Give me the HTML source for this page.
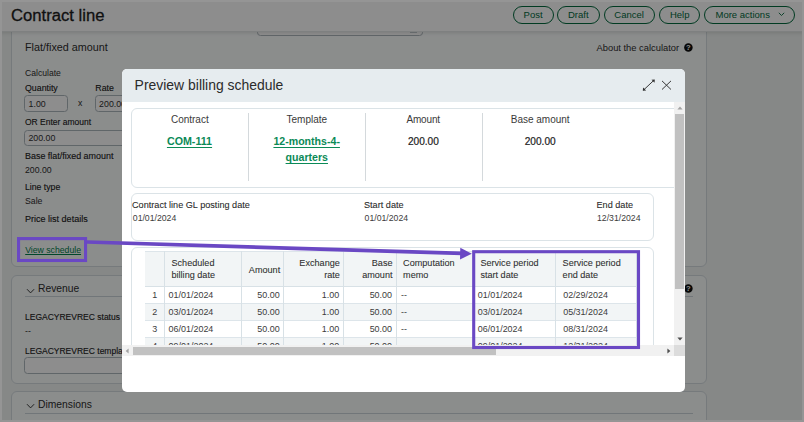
<!DOCTYPE html>
<html lang="en"><head><meta charset="utf-8"><title>Contract line</title>
<style>
html,body{margin:0;padding:0}
body{width:804px;height:422px;overflow:hidden;position:relative;background:#959595;font-family:"Liberation Sans",sans-serif;}
.abs{position:absolute;display:block}
.t{position:absolute;white-space:nowrap;line-height:1;color:#1a1a1a}
.r{position:absolute;box-sizing:border-box}
#bg{position:absolute;left:0;top:0;width:804px;height:422px;background:#f2f6f4;overflow:hidden}
#ov{position:absolute;left:0;top:0;width:804px;height:422px;background:rgba(3,3,3,.45)}
.card{background:#fcfffe;border:1px solid #d5dde1;border-radius:6px}
.inp{background:#fff;border:1.2px solid #aeb8bd;border-radius:3.5px}
.iv{color:#303030}
#hdr{background:#fff;box-shadow:0 1px 0 #e3e7e7,0 2px 4px rgba(0,0,0,.13)}
.d{color:#2c2c2c}
.m{color:#202020;-webkit-text-stroke:0.13px #202020}
.lnk{color:#00804a;text-decoration:underline;text-decoration-thickness:0.8px;text-underline-offset:1.2px}
.btn{position:absolute;box-sizing:border-box;border:1.4px solid #006a3c;border-radius:10px;color:#006a3c;font-size:9.5px;line-height:16.4px;text-align:center;white-space:nowrap}
#modal{position:absolute;left:122px;top:69px;width:563px;height:323px;background:#fff;border-radius:5px;overflow:hidden}
#mh{position:absolute;left:0;top:0;width:563px;height:33px;background:#e6ecef}
#vp{position:absolute;left:122px;top:102px;width:552px;height:243px;overflow:hidden;background:#fff}
.mcard{background:#fff;border:1px solid #dbe3e7;border-radius:6px}
.g{color:#3a3a3a}
.ml{color:#0b8a57;font-weight:bold;text-decoration:underline;text-underline-offset:1.5px}
.v{color:#222;-webkit-text-stroke:0.2px #222}
.k{color:#2a2a2a;-webkit-text-stroke:0.08px #2a2a2a}
.c{color:#3c3c3c}
.h{color:#303030;-webkit-text-stroke:0.08px #303030}
</style></head>
<body>
<div id="bg">
<div class="r card" style="left:11px;top:20px;width:696px;height:247.4px;"></div>
<div class="r card" style="left:11px;top:274.5px;width:696px;height:109px;"></div>
<div class="r card" style="left:11px;top:390.6px;width:696px;height:60px;"></div>
<div class="r inp" style="left:256.5px;top:20px;width:166.4px;height:15.5px;"></div>
<div class="r " style="left:409.5px;top:31.5px;width:7px;height:1px;background:#c5cdd1"></div>
<div class="t d" style="left:25px;top:42.00px;font-size:10.8px;">Flat/fixed amount</div>
<div class="t d" style="left:596.5px;top:44.00px;font-size:9.35px;">About the calculator</div>
<svg class="abs" style="left:683.7px;top:43.45px" width="9" height="9" viewBox="0 0 9 9"><circle cx="4.4" cy="4.4" r="4.25" fill="#0c0c0c"/><text x="4.4" y="7.2" font-size="7.6" font-weight="bold" text-anchor="middle" fill="#fff" font-family="Liberation Sans, sans-serif">?</text></svg>
<div class="t d" style="left:25px;top:69.00px;font-size:8.6px;">Calculate</div>
<div class="t d m" style="left:25px;top:84.00px;font-size:8.8px;">Quantity</div>
<div class="t d m" style="left:95.3px;top:84.00px;font-size:8.8px;">Rate</div>
<div class="r inp" style="left:24.2px;top:95.2px;width:43.7px;height:16.6px;"></div>
<div class="t iv" style="left:28.6px;top:100.00px;font-size:8.8px;">1.00</div>
<div class="t d" style="left:78px;top:99.00px;font-size:8.7px;">x</div>
<div class="r inp" style="left:95px;top:95.2px;width:60px;height:16.6px;"></div>
<div class="t iv" style="left:99.1px;top:100.00px;font-size:8.8px;">200.00</div>
<div class="t d m" style="left:25px;top:118.00px;font-size:8.5px;">OR Enter amount</div>
<div class="r inp" style="left:24.2px;top:129.8px;width:200px;height:16.1px;"></div>
<div class="t iv" style="left:28.4px;top:134.00px;font-size:8.8px;">200.00</div>
<div class="t d m" style="left:25px;top:152.00px;font-size:8.95px;">Base flat/fixed amount</div>
<div class="t d" style="left:25px;top:166.00px;font-size:8.7px;">200.00</div>
<div class="t d m" style="left:25px;top:183.00px;font-size:8.7px;">Line type</div>
<div class="t d" style="left:25px;top:197.00px;font-size:8.7px;">Sale</div>
<div class="t d m" style="left:24.9px;top:215.00px;font-size:9.05px;">Price list details</div>
<div class="t lnk" style="left:25.2px;top:246.00px;font-size:8.7px;">View schedule</div>
<svg class="abs" style="left:26px;top:287.6px" width="10" height="7" viewBox="0 0 10 7"><path d="M1 1.2 L4.55 4.9 L8.1 1.2" fill="none" stroke="#262626" stroke-width="0.9"/></svg>
<div class="t d" style="left:38px;top:284.00px;font-size:10.3px;">Revenue</div>
<div class="r " style="left:24.7px;top:296px;width:668.3px;height:1px;background:#ccd6db"></div>
<div class="t d m" style="left:25px;top:313.00px;font-size:8.5px;">LEGACYREVREC status</div>
<div class="t d" style="left:25px;top:327.00px;font-size:8.7px;">--</div>
<div class="t d m" style="left:25px;top:347.00px;font-size:8.5px;">LEGACYREVREC template</div>
<div class="r inp" style="left:24.2px;top:357.2px;width:200px;height:16.4px;"></div>
<svg class="abs" style="left:683.55px;top:283.6px" width="9" height="9" viewBox="0 0 9 9"><circle cx="4.4" cy="4.4" r="4.25" fill="#0c0c0c"/><text x="4.4" y="7.2" font-size="7.6" font-weight="bold" text-anchor="middle" fill="#fff" font-family="Liberation Sans, sans-serif">?</text></svg>
<svg class="abs" style="left:26px;top:403.4px" width="10" height="7" viewBox="0 0 10 7"><path d="M1 1.2 L4.55 4.9 L8.1 1.2" fill="none" stroke="#262626" stroke-width="0.9"/></svg>
<div class="t d" style="left:38px;top:400.00px;font-size:10.3px;">Dimensions</div>
<div class="r " style="left:24.7px;top:412.5px;width:668.3px;height:1px;background:#ccd6db"></div>
<div class="r" id="hdr" style="left:0;top:0;width:804px;height:31px"></div>
<div class="t d" style="left:11px;top:8.00px;font-size:16.65px;-webkit-text-stroke:0.3px #1c1c1c;color:#1c1c1c">Contract line</div>
<div class="btn" style="left:512.5px;top:5.9px;width:41.200000000000045px;height:18.6px">Post</div>
<div class="btn" style="left:557px;top:5.9px;width:42.5px;height:18.6px">Draft</div>
<div class="btn" style="left:603.5px;top:5.9px;width:51.299999999999955px;height:18.6px">Cancel</div>
<div class="btn" style="left:659px;top:5.9px;width:41.299999999999955px;height:18.6px">Help</div>
<div class="btn" style="left:704px;top:5.9px;width:91.2px;height:18.6px;text-align:left;padding-left:10.5px">More actions<svg style="position:absolute;left:72.8px;top:5.6px" width="7" height="5" viewBox="0 0 7 5"><path d="M0.8 0.8 L3.5 3.5 L6.2 0.8" fill="none" stroke="#006a3c" stroke-width="0.9"/></svg></div>
</div>
<div id="ov"></div>
<div id="modal">
<div id="mh"></div>
</div>
<div class="t " style="left:134.6px;top:79.00px;font-size:13.95px;color:#2b2b2b">Preview billing schedule</div>
<svg class="abs" style="left:640px;top:77px" width="17" height="17" viewBox="0 0 17 17"><path d="M3.6 13 L14 3.2" stroke="#303030" stroke-width="0.95" fill="none"/><path d="M14.8 2.4 L11.5 2.7 L14.5 5.7 Z" fill="#303030"/><path d="M2.8 13.8 L3.1 10.5 L6.1 13.5 Z" fill="#303030"/></svg>
<svg class="abs" style="left:660px;top:79px" width="13" height="13" viewBox="0 0 13 13"><path d="M2 1.9 L11 10.5 M11 1.9 L2 10.5" stroke="#383838" stroke-width="1" fill="none"/></svg>
<div id="vp">
<div class="r mcard" style="left:9px;top:6.400000000000006px;width:600px;height:80px;"></div>
<div class="r " style="left:126.19999999999999px;top:10.5px;width:1px;height:68px;background:#d4d9dc"></div>
<div class="r " style="left:243.2px;top:10.5px;width:1px;height:68px;background:#d4d9dc"></div>
<div class="r " style="left:360px;top:10.5px;width:1px;height:68px;background:#d4d9dc"></div>
<div class="t g" style="left:-82.19999999999999px;width:300px;text-align:center;top:13.00px;font-size:10.0px;">Contract</div>
<div class="t ml" style="left:-82.5px;width:300px;text-align:center;top:34.00px;font-size:10.7px;">COM-111</div>
<div class="t g" style="left:34.80000000000001px;width:300px;text-align:center;top:13.00px;font-size:10.0px;">Template</div>
<div class="t ml" style="left:34.69999999999999px;width:300px;text-align:center;top:34.00px;font-size:10.6px;">12-months-4-</div>
<div class="t ml" style="left:34.80000000000001px;width:300px;text-align:center;top:50.00px;font-size:10.6px;">quarters</div>
<div class="t g" style="left:151.2px;width:300px;text-align:center;top:13.00px;font-size:10.0px;letter-spacing:-0.15px">Amount</div>
<div class="t v" style="left:151.39999999999998px;width:300px;text-align:center;top:35.00px;font-size:10.15px;">200.00</div>
<div class="t g" style="left:268.20000000000005px;width:300px;text-align:center;top:13.00px;font-size:10.0px;">Base amount</div>
<div class="t v" style="left:268.20000000000005px;width:300px;text-align:center;top:35.00px;font-size:10.15px;">200.00</div>
<div class="r mcard" style="left:9px;top:91px;width:523px;height:48px;"></div>
<div class="t k" style="left:10px;top:99.00px;font-size:9.15px;">Contract line GL posting date</div>
<div class="t c" style="left:10.800000000000011px;top:112.00px;font-size:8.7px;">01/01/2024</div>
<div class="t k" style="left:242px;top:99.00px;font-size:9.15px;">Start date</div>
<div class="t c" style="left:242.60000000000002px;top:112.00px;font-size:8.7px;">01/01/2024</div>
<div class="t k" style="left:474.5px;top:99.00px;font-size:9.15px;">End date</div>
<div class="t c" style="left:475px;top:112.00px;font-size:8.7px;">12/31/2024</div>
<div class="r mcard" style="left:9px;top:145px;width:523px;height:140px;"></div>
<div class="r " style="left:23px;top:149px;width:492.0px;height:35.5px;background:#f2f5f6;border-top:1px solid #dde5ea;border-bottom:1px solid #d8e1e6"></div>
<div class="r " style="left:23px;top:185.0px;width:492.0px;height:17px;background:#fff;border-bottom:1px solid #dde5ea"></div>
<div class="r " style="left:23px;top:202.0px;width:492.0px;height:17px;background:#f2f5f6;border-bottom:1px solid #dde5ea"></div>
<div class="r " style="left:23px;top:219.0px;width:492.0px;height:17px;background:#fff;border-bottom:1px solid #dde5ea"></div>
<div class="r " style="left:23px;top:236.0px;width:492.0px;height:17px;background:#f2f5f6;border-bottom:1px solid #dde5ea"></div>
<div class="r " style="left:42.0px;top:149px;width:1px;height:120px;background:#d8e1e6"></div>
<div class="r " style="left:119.0px;top:149px;width:1px;height:120px;background:#d8e1e6"></div>
<div class="r " style="left:161.0px;top:149px;width:1px;height:120px;background:#d8e1e6"></div>
<div class="r " style="left:221.0px;top:149px;width:1px;height:120px;background:#d8e1e6"></div>
<div class="r " style="left:274.0px;top:149px;width:1px;height:120px;background:#d8e1e6"></div>
<div class="r " style="left:351.0px;top:149px;width:1px;height:120px;background:#d8e1e6"></div>
<div class="r " style="left:433.0px;top:149px;width:1px;height:120px;background:#d8e1e6"></div>
<div class="r " style="left:514.0px;top:149px;width:1px;height:120px;background:#d8e1e6"></div>
<div class="t h" style="left:49.5px;top:157.00px;font-size:9.1px;">Scheduled</div>
<div class="t h" style="left:49.5px;top:169.00px;font-size:9.1px;">billing date</div>
<div class="t h" style="right:393.80px;top:164.00px;font-size:9.1px;">Amount</div>
<div class="t h" style="right:334.20px;top:157.00px;font-size:9.1px;">Exchange</div>
<div class="t h" style="right:334.20px;top:169.00px;font-size:9.1px;">rate</div>
<div class="t h" style="right:281.50px;top:157.00px;font-size:9.1px;">Base</div>
<div class="t h" style="right:281.50px;top:169.00px;font-size:9.1px;">amount</div>
<div class="t h" style="left:281.1px;top:157.00px;font-size:9.1px;">Computation</div>
<div class="t h" style="left:281.1px;top:169.00px;font-size:9.1px;">memo</div>
<div class="t h" style="left:358.4px;top:157.00px;font-size:9.1px;">Service period</div>
<div class="t h" style="left:358.4px;top:169.00px;font-size:9.1px;">start date</div>
<div class="t h" style="left:440.6px;top:157.00px;font-size:9.1px;">Service period</div>
<div class="t h" style="left:440.6px;top:169.00px;font-size:9.1px;">end date</div>
<div class="t c" style="left:-117.19999999999999px;width:300px;text-align:center;top:189.00px;font-size:8.95px;">1</div>
<div class="t c" style="left:46.599999999999994px;top:189.00px;font-size:8.95px;">01/01/2024</div>
<div class="t c" style="right:394.40px;top:189.00px;font-size:8.95px;">50.00</div>
<div class="t c" style="right:334.80px;top:189.00px;font-size:8.95px;">1.00</div>
<div class="t c" style="right:282.00px;top:189.00px;font-size:8.95px;">50.00</div>
<div class="t c" style="left:279.1px;top:189.00px;font-size:8.95px;">--</div>
<div class="t c" style="left:355.8px;top:189.00px;font-size:8.95px;">01/01/2024</div>
<div class="t c" style="left:441.20000000000005px;top:189.00px;font-size:8.95px;">02/29/2024</div>
<div class="t c" style="left:-117.19999999999999px;width:300px;text-align:center;top:206.00px;font-size:8.95px;">2</div>
<div class="t c" style="left:46.599999999999994px;top:206.00px;font-size:8.95px;">03/01/2024</div>
<div class="t c" style="right:394.40px;top:206.00px;font-size:8.95px;">50.00</div>
<div class="t c" style="right:334.80px;top:206.00px;font-size:8.95px;">1.00</div>
<div class="t c" style="right:282.00px;top:206.00px;font-size:8.95px;">50.00</div>
<div class="t c" style="left:279.1px;top:206.00px;font-size:8.95px;">--</div>
<div class="t c" style="left:355.8px;top:206.00px;font-size:8.95px;">03/01/2024</div>
<div class="t c" style="left:441.20000000000005px;top:206.00px;font-size:8.95px;">05/31/2024</div>
<div class="t c" style="left:-117.19999999999999px;width:300px;text-align:center;top:223.00px;font-size:8.95px;">3</div>
<div class="t c" style="left:46.599999999999994px;top:223.00px;font-size:8.95px;">06/01/2024</div>
<div class="t c" style="right:394.40px;top:223.00px;font-size:8.95px;">50.00</div>
<div class="t c" style="right:334.80px;top:223.00px;font-size:8.95px;">1.00</div>
<div class="t c" style="right:282.00px;top:223.00px;font-size:8.95px;">50.00</div>
<div class="t c" style="left:279.1px;top:223.00px;font-size:8.95px;">--</div>
<div class="t c" style="left:355.8px;top:223.00px;font-size:8.95px;">06/01/2024</div>
<div class="t c" style="left:441.20000000000005px;top:223.00px;font-size:8.95px;">08/31/2024</div>
<div class="t c" style="left:-117.19999999999999px;width:300px;text-align:center;top:240.00px;font-size:8.95px;">4</div>
<div class="t c" style="left:46.599999999999994px;top:240.00px;font-size:8.95px;">09/01/2024</div>
<div class="t c" style="right:394.40px;top:240.00px;font-size:8.95px;">50.00</div>
<div class="t c" style="right:334.80px;top:240.00px;font-size:8.95px;">1.00</div>
<div class="t c" style="right:282.00px;top:240.00px;font-size:8.95px;">50.00</div>
<div class="t c" style="left:279.1px;top:240.00px;font-size:8.95px;">--</div>
<div class="t c" style="left:355.8px;top:240.00px;font-size:8.95px;">09/01/2024</div>
<div class="t c" style="left:441.20000000000005px;top:240.00px;font-size:8.95px;">12/31/2024</div>
</div>
<div class="r " style="left:674px;top:102px;width:11px;height:243px;background:#f1f1f1"></div>
<div class="r " style="left:675.4px;top:113.9px;width:8.5px;height:175.3px;background:#c1c1c1"></div>
<svg class="abs" style="left:677px;top:106px" width="6" height="4" viewBox="0 0 6 4"><path d="M0.4 3.6 L3 0.6 L5.6 3.6 Z" fill="#a3a3a3"/></svg>
<svg class="abs" style="left:677px;top:337px" width="6" height="4" viewBox="0 0 6 4"><path d="M0.4 0.4 L3 3.4 L5.6 0.4 Z" fill="#505050"/></svg>
<div class="r " style="left:122px;top:345px;width:552px;height:11px;background:#f1f1f1"></div>
<div class="r " style="left:133px;top:347px;width:362.6px;height:8px;background:#c1c1c1"></div>
<svg class="abs" style="left:124.6px;top:348px" width="4" height="6" viewBox="0 0 4 6"><path d="M3.6 0.4 L0.6 3 L3.6 5.6 Z" fill="#a3a3a3"/></svg>
<svg class="abs" style="left:666.5px;top:348px" width="4" height="6" viewBox="0 0 4 6"><path d="M0.4 0.4 L3.4 3 L0.4 5.6 Z" fill="#505050"/></svg>
<div class="r " style="left:674px;top:345px;width:11px;height:11px;background:#dcdcdc"></div>
<div class="r " style="left:0px;top:0px;width:804px;height:2px;background:#959595"></div>
<div class="r " style="left:0px;top:420px;width:804px;height:2px;background:#959595"></div>
<div class="r " style="left:0px;top:0px;width:2px;height:422px;background:#959595"></div>
<div class="r " style="left:802px;top:0px;width:2px;height:422px;background:#959595"></div>
<svg class="abs" style="left:0;top:0" width="804" height="422" viewBox="0 0 804 422"><rect x="18.55" y="238.6" width="67" height="21.9" fill="none" stroke="#6a48c4" stroke-width="3.1"/><rect x="473.7" y="251.7" width="164.8" height="95.8" fill="none" stroke="#6a48c4" stroke-width="3.1"/><path d="M87 242 L462 253.4" stroke="#6a48c4" stroke-width="3.7" fill="none"/><path d="M471.8 253.7 L460 259.4 L460.3 247.7 Z" fill="#6a48c4"/></svg>
</body></html>
